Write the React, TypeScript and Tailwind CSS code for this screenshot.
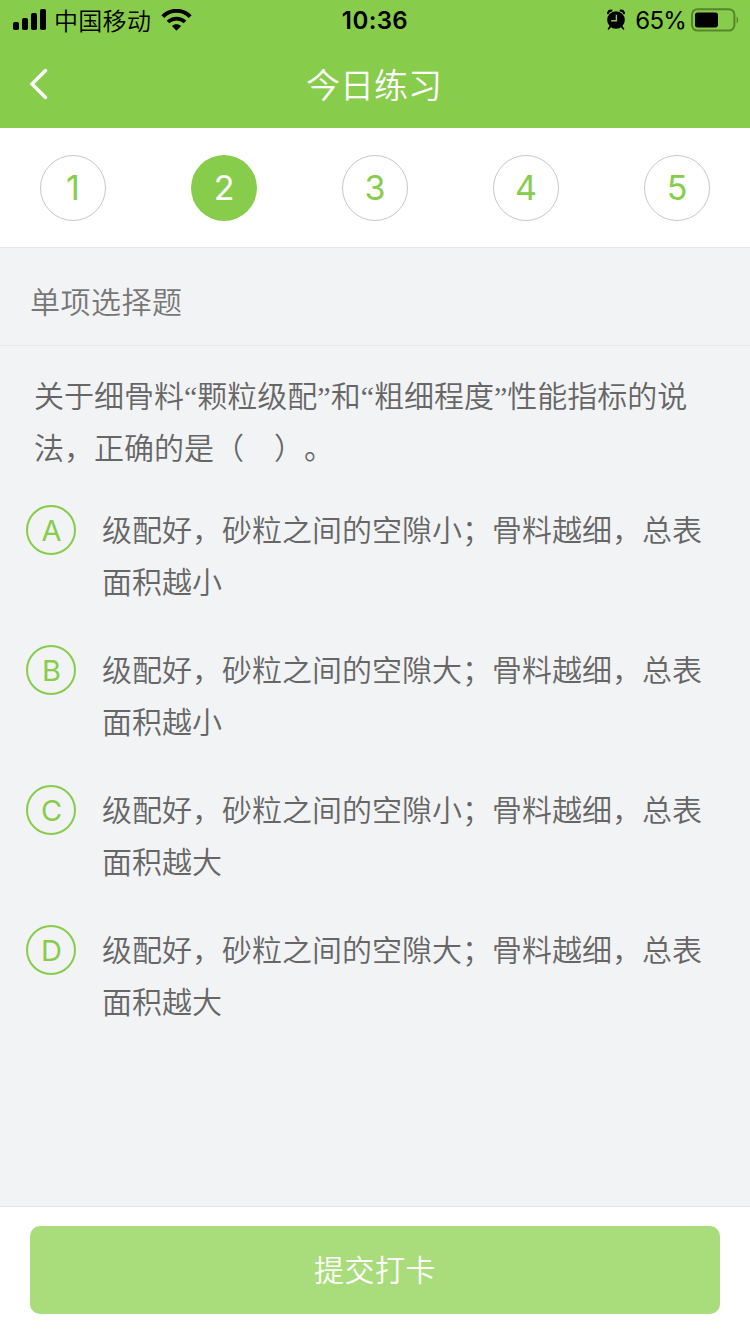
import React, { useState } from 'react';

const questions = [1, 2, 3, 4, 5];

const options = [
  { key: 'A', text: '级配好，砂粒之间的空隙小；骨料越细，总表面积越小' },
  { key: 'B', text: '级配好，砂粒之间的空隙大；骨料越细，总表面积越小' },
  { key: 'C', text: '级配好，砂粒之间的空隙小；骨料越细，总表面积越大' },
  { key: 'D', text: '级配好，砂粒之间的空隙大；骨料越细，总表面积越大' },
];

const StatusBar = () => (
  <div className="grid h-10 grid-cols-[1fr_auto_1fr] items-center pl-[13px] pr-[11px] text-black">
    <div className="flex items-center">
      {/* Signal */}
      <svg width="33" height="22" viewBox="0 0 33 22" fill="currentColor">
        <rect x="0" y="13" width="6" height="8" rx="1.8" />
        <rect x="9" y="9" width="6" height="12" rx="1.8" />
        <rect x="18" y="4" width="6" height="17" rx="1.8" />
        <rect x="27" y="0" width="6" height="21" rx="1.8" />
      </svg>
      <span className="ml-2 pt-[3px] text-[24px] leading-[36px] tracking-[0.3px]">中国移动</span>
      {/* Wifi */}
      <svg className="ml-[10px]" width="31" height="22" viewBox="0 0 31 22" fill="none" stroke="currentColor">
        <path d="M1.8 7.6C9.4 -0.1 21.6 -0.1 29.2 7.6" strokeWidth="4" />
        <path d="M7 13C11.8 8.4 19.2 8.4 24 13" strokeWidth="3.8" />
        <path d="M10.9 17.1C13.5 14.6 17.5 14.6 20.1 17.1L15.5 21.8Z" fill="currentColor" stroke="none" />
      </svg>
    </div>
    <span className="pr-0.5 pt-0.5 text-[24px] font-semibold leading-[36px] tracking-[0.4px]">10:36</span>
    <div className="flex items-center justify-end">
      {/* Alarm */}
      <svg width="20" height="22" viewBox="0 0 20 22" fill="none" stroke="currentColor">
        <circle cx="10" cy="11" r="8.8" fill="currentColor" stroke="none" />
        <path d="M2 4.2C2.4 2.6 3.8 1.5 5.4 1.6M18 4.2C17.6 2.6 16.2 1.5 14.6 1.6" strokeWidth="2.2" strokeLinecap="round" />
        <path d="M4.2 17.8L2.6 19.8M15.8 17.8L17.4 19.8" strokeWidth="1.8" strokeLinecap="round" />
        <path d="M10.4 5.8V11.8H5.2" stroke="#87cc4b" strokeWidth="1.4" />
      </svg>
      <span className="ml-[9px] pt-0.5 text-[24px] font-normal leading-[36px] tracking-[-0.8px]">65%</span>
      {/* Battery */}
      <svg className="ml-[5px]" width="48" height="24" viewBox="0 0 48 24" fill="none">
        <rect x="1" y="1.2" width="42.4" height="21.4" rx="5.5" stroke="#55852c" strokeWidth="2" />
        <rect x="4" y="4.4" width="23" height="15" rx="2.6" fill="#000" />
        <path d="M45.6 8.4C47.6 9.6 47.6 14.2 45.6 15.4Z" fill="#55852c" />
      </svg>
    </div>
  </div>
);

const App = () => {
  const [current, setCurrent] = useState(2);

  return (
    <div className="flex h-[1334px] w-[750px] flex-col overflow-hidden bg-[#f2f3f5] font-['Inter','Noto_Sans_CJK_SC',sans-serif] font-[350] [text-spacing-trim:space-all]">
      <header className="h-32 shrink-0 bg-[#87cc4b]">
        <StatusBar />
        <div className="grid h-22 grid-cols-[1fr_auto_1fr] items-center">
          <button className="ml-[29px] w-5" aria-label="返回">
            <svg width="20" height="32" viewBox="0 0 20 32" fill="none">
              <path d="M16.5 2.5L3 16L16.5 29.5" stroke="#fff" strokeWidth="3.4" strokeLinecap="round" />
            </svg>
          </button>
          <h1 className="pr-0.5 pt-[3px] text-[34px] leading-[50px] text-white">今日练习</h1>
        </div>
      </header>

      {/* Question numbers */}
      <nav className="flex h-[120px] shrink-0 items-center justify-between border-b border-[#e6e6e6] bg-white px-10">
        {questions.map((n) => (
          <button
            key={n}
            onClick={() => setCurrent(n)}
            className={`flex size-[66px] items-center justify-center rounded-full text-[34px] font-normal ${
              current === n ? 'bg-[#87cc4b] text-white' : 'border border-[#c8c8c8] text-[#87cc4b]'
            }`}
          >
            {n}
          </button>
        ))}
      </nav>

      <div className="h-[98px] shrink-0 border-b border-[#e8e8ea] px-[30px] pt-[31px] text-[30px] leading-[46px] tracking-[0.5px] text-[#777]">
        单项选择题
      </div>

      <main className="flex-1 text-[30px] leading-[52px] text-[#666]">
        <p className="mt-[25px] pl-[34px] pr-[50px] font-['Liberation_Serif','Noto_Sans_CJK_SC',serif]">
          关于细骨料“颗粒级配”和“粗细程度”性能指标的说法，正确的是（&nbsp;&nbsp;&nbsp;&nbsp;）。
        </p>
        <ul className="mt-[29px] flex flex-col gap-9">
          {options.map((option) => (
            <li key={option.key} className="flex items-start pl-[26px] pr-[40px]">
              <span className="mt-px flex size-[50px] shrink-0 items-center justify-center rounded-full border-2 border-[#87cc4b] pl-px pt-px text-[29px] font-normal text-[#87cc4b]">
                {option.key}
              </span>
              <span className="ml-[26px]">{option.text}</span>
            </li>
          ))}
        </ul>
      </main>

      <footer className="h-32 shrink-0 border-t border-[#e6e6e6] bg-white px-[30px] pt-[19px]">
        <button className="h-22 w-full rounded-[10px] bg-[#a9dc7a] text-[30px] tracking-[0.5px] text-white">
          提交打卡
        </button>
      </footer>
    </div>
  );
};

export default App;
